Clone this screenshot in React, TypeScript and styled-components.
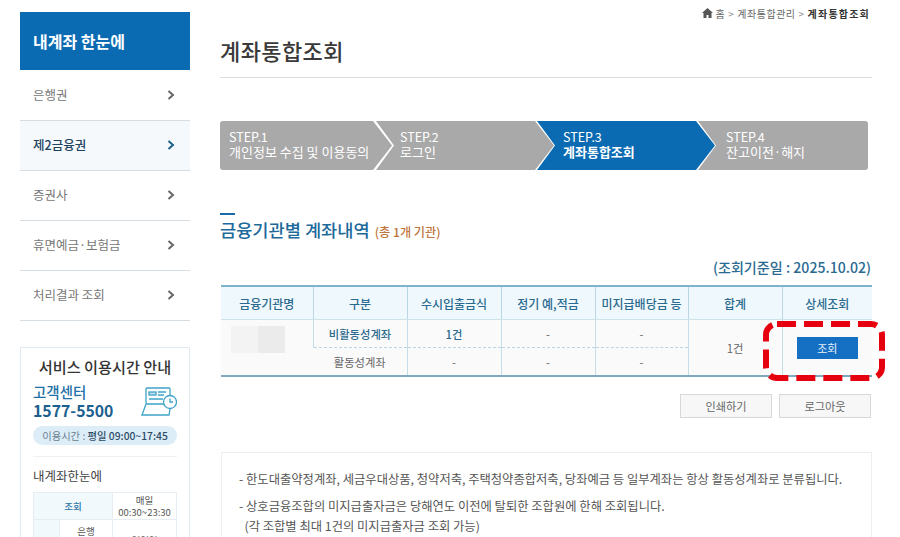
import React from 'react';
import styled, { createGlobalStyle } from 'styled-components';

const steps = [
  { no: 'STEP.1', label: '개인정보 수집 및 이용동의', width: 172, pad: 9, overlap: 0 },
  { no: 'STEP.2', label: '로그인', width: 178, pad: 24, overlap: 16 },
  { no: 'STEP.3', label: '계좌통합조회', width: 178, pad: 26, overlap: 17, active: true },
  { no: 'STEP.4', label: '잔고이전·해지', width: 170, pad: 28, overlap: 17, last: true },
];

const menus = ['은행권', '제2금융권', '증권사', '휴면예금·보험금', '처리결과 조회'];

const App: React.FC = () => {
  return (
    <Page>
      <GlobalStyle />
      <Sidebar>
        <SideTitle>내계좌 한눈에</SideTitle>
        <Menu>
          {menus.map((m, i) => (
            <MenuItem key={m} $active={i === 1}>
              {m}
              <svg width="8" height="10" viewBox="0 0 8 10">
                <path d="M1.5 1 L6 5 L1.5 9" fill="none" stroke={i === 1 ? '#1f5f8a' : '#666'} strokeWidth="2" />
              </svg>
            </MenuItem>
          ))}
        </Menu>
        <ServiceBox>
          <ServiceTitle>서비스 이용시간 안내</ServiceTitle>
          <CenterRow>
            <div>
              <CenterName>고객센터</CenterName>
              <CenterTel>1577-5500</CenterTel>
            </div>
            <svg width="36" height="30" viewBox="0 0 36 30" fill="none" stroke="#3fa3c9" strokeWidth="1.3">
              <rect x="5" y="1" width="24" height="16" rx="1" />
              <rect x="8" y="5" width="7" height="3" fill="#bfe0ee" />
              <path d="M17 5h8M17 8h6M8 12h14" />
              <path d="M5 17 L1 28 H28 L29 22" />
              <circle cx="29" cy="15" r="6.5" fill="#fff" />
              <path d="M29 11.5V15h3" />
            </svg>
          </CenterRow>
          <HoursPill>
            이용시간 : <b>평일 09:00~17:45</b>
          </HoursPill>
          <ServiceRule />
          <ServiceSub>내계좌한눈에</ServiceSub>
          <HoursTable>
            <colgroup>
              <col style={{ width: 26 }} />
              <col style={{ width: 53 }} />
              <col />
            </colgroup>
            <tbody>
              <tr>
                <HoursHead colSpan={2}>조회</HoursHead>
                <HoursCell>
                  매일
                  <br />
                  00:30~23:30
                </HoursCell>
              </tr>
              <tr>
                <HoursHead />
                <HoursCell $top>은행</HoursCell>
                <HoursCell $tall>영업일</HoursCell>
              </tr>
            </tbody>
          </HoursTable>
        </ServiceBox>
      </Sidebar>

      <Main>
        <Breadcrumb>
          <svg width="11" height="10" viewBox="0 0 11 10">
            <path d="M5.5 0 L11 5 H9.5 V10 H6.5 V7 H4.5 V10 H1.5 V5 H0 Z" fill="#555" />
          </svg>
          <span>홈</span>
          <Sep>&gt;</Sep>
          <span>계좌통합관리</span>
          <Sep>&gt;</Sep>
          <b>계좌통합조회</b>
        </Breadcrumb>
        <PageTitle>계좌통합조회</PageTitle>

        <Steps>
          {steps.map((s, i) => (
            <Step
              key={s.no}
              $w={s.width}
              $pad={s.pad}
              $overlap={s.overlap}
              $first={i === 0}
              $last={!!s.last}
              $active={!!s.active}
            >
              <span>{s.no}</span>
              <StepLabel $active={!!s.active}>{s.label}</StepLabel>
            </Step>
          ))}
        </Steps>

        <SectionHead>
          <SectionTitle>금융기관별 계좌내역</SectionTitle>
          <SectionCount>(총 1개 기관)</SectionCount>
        </SectionHead>
        <BaseDate>(조회기준일 : 2025.10.02)</BaseDate>

        <TableWrap>
          <Table>
            <colgroup>
              <col style={{ width: 92 }} />
              <col style={{ width: 94 }} />
              <col style={{ width: 94 }} />
              <col style={{ width: 94 }} />
              <col style={{ width: 93 }} />
              <col style={{ width: 94 }} />
              <col />
            </colgroup>
            <thead>
              <tr>
                <Th>금융기관명</Th>
                <Th>구분</Th>
                <Th>수시입출금식</Th>
                <Th>정기 예,적금</Th>
                <Th>미지급배당금 등</Th>
                <Th>합계</Th>
                <Th>상세조회</Th>
              </tr>
            </thead>
            <tbody>
              <tr>
                <Td rowSpan={2}>
                  <BlurName>
                    <i />
                    <i />
                  </BlurName>
                </Td>
                <Td $dash $strong>비활동성계좌</Td>
                <Td $dash $strong>1건</Td>
                <Td $dash>-</Td>
                <Td $dash>-</Td>
                <Td rowSpan={2}>1건</Td>
                <Td rowSpan={2}>
                  <QueryButton>조회</QueryButton>
                </Td>
              </tr>
              <tr>
                <Td>활동성계좌</Td>
                <Td>-</Td>
                <Td>-</Td>
                <Td>-</Td>
              </tr>
            </tbody>
          </Table>
          <Highlight viewBox="0 0 122 60" width="122" height="60">
            <rect
              x="3"
              y="3"
              width="116"
              height="54"
              rx="11"
              fill="none"
              stroke="#e6000f"
              strokeWidth="6"
              strokeDasharray="19 8"
            />
          </Highlight>
        </TableWrap>

        <Actions>
          <ActionButton>인쇄하기</ActionButton>
          <ActionButton>로그아웃</ActionButton>
        </Actions>

        <Notes>
          <Note>- 한도대출약정계좌, 세금우대상품, 청약저축, 주택청약종합저축, 당좌예금 등 일부계좌는 항상 활동성계좌로 분류됩니다.</Note>
          <Note>
            - 상호금융조합의 미지급출자금은 당해연도 이전에 탈퇴한 조합원에 한해 조회됩니다.
            <br />
            &nbsp;&nbsp;(각 조합별 최대 1건의 미지급출자금 조회 가능)
          </Note>
        </Notes>
      </Main>
    </Page>
  );
};

const GlobalStyle = createGlobalStyle`
  html, body {
    margin: 0;
    padding: 0;
    height: 537px;
    overflow: hidden;
    background: #fff;
  }
  body {
    font-family: "Noto Sans CJK KR", "Noto Sans", sans-serif;
    color: #555;
  }
`;

const Page = styled.div`
  display: flex;
  align-items: flex-start;
  gap: 30px;
  width: 900px;
  height: 537px;
  padding-left: 20px;
  box-sizing: border-box;
  overflow: hidden;
`;

const Sidebar = styled.aside`
  flex: 0 0 170px;
  padding-top: 12px;
`;

const SideTitle = styled.div`
  height: 58px;
  padding-left: 13px;
  box-sizing: border-box;
  display: flex;
  align-items: center;
  background: #0a6bb3;
  color: #fff;
  font-size: 16px;
  font-weight: 700;
`;

const Menu = styled.div`
  padding-top: 1px;
  margin-bottom: 26px;
`;

const MenuItem = styled.div<{ $active?: boolean }>`
  height: 50px;
  padding: 0 15px 2px 13px;
  box-sizing: border-box;
  display: flex;
  align-items: center;
  justify-content: space-between;
  border-bottom: 1px solid #d5dde3;
  background: ${(p) => (p.$active ? '#f5f9fc' : '#fff')};
  color: ${(p) => (p.$active ? '#1f4460' : '#777')};
  font-size: 12.5px;
  font-weight: ${(p) => (p.$active ? 500 : 400)};
`;

const ServiceBox = styled.div`
  border: 1px solid #dfeaf1;
  padding: 7px 12px 0;
  height: 220px;
  box-sizing: border-box;
`;

const ServiceTitle = styled.div`
  text-align: center;
  font-size: 15.2px;
  font-weight: 500;
  color: #333;
  line-height: 22px;
  white-space: nowrap;
`;

const CenterRow = styled.div`
  display: flex;
  justify-content: space-between;
  align-items: center;
  margin-top: 6px;
`;

const CenterName = styled.div`
  color: #1f72a8;
  font-size: 14.5px;
  font-weight: 500;
  line-height: 18px;
`;

const CenterTel = styled.div`
  color: #1d5f8f;
  font-size: 15.8px;
  font-weight: 700;
  line-height: 19px;
`;

const HoursPill = styled.div`
  margin-top: 6px;
  height: 19px;
  line-height: 19px;
  border-radius: 10px;
  background: #dcedf8;
  text-align: center;
  font-size: 10.3px;
  color: #6a7f8d;
  white-space: nowrap;

  b {
    color: #2d4b66;
    font-weight: 500;
  }
`;

const ServiceRule = styled.div`
  height: 1px;
  background: #eef0f1;
  margin-top: 11px;
`;

const ServiceSub = styled.div`
  font-size: 12.5px;
  color: #444;
  line-height: 18px;
  margin-top: 10px;
`;

const HoursTable = styled.table`
  width: 100%;
  table-layout: fixed;
  border-collapse: collapse;
  margin-top: 7px;
  font-size: 9.5px;
  line-height: 12px;
`;

const HoursHead = styled.th`
  border: 1px solid #e6eef3;
  background: #f1f9fd;
  color: #2a73a5;
  font-weight: 500;
  height: 25px;
  padding: 0;
`;

const HoursCell = styled.td<{ $top?: boolean; $tall?: boolean }>`
  border: 1px solid #e6eef3;
  text-align: center;
  color: #555;
  padding: ${(p) => (p.$top ? '5px 0 0' : '1px 0')};
  vertical-align: ${(p) => (p.$top ? 'top' : 'middle')};
  height: ${(p) => (p.$tall ? '38px' : 'auto')};
`;

const Main = styled.main`
  flex: 0 0 652px;
  min-width: 0;
`;

const Breadcrumb = styled.div`
  height: 26px;
  box-sizing: border-box;
  padding-right: 2px;
  display: flex;
  align-items: center;
  justify-content: flex-end;
  gap: 3px;
  font-size: 10px;
  letter-spacing: 0.5px;
  color: #666;

  b {
    color: #333;
    font-weight: 700;
    letter-spacing: 1.2px;
  }
`;

const Sep = styled.span`
  color: #888;
`;

const PageTitle = styled.h1`
  margin: 0;
  height: 52px;
  box-sizing: border-box;
  padding-top: 6px;
  font-size: 22px;
  line-height: 36px;
  font-weight: 500;
  letter-spacing: 0.4px;
  color: #3a3a3a;
  border-bottom: 1px solid #dcdcdc;
`;

const Steps = styled.div`
  display: flex;
  margin-top: 43px;
`;

const Step = styled.div<{
  $w: number;
  $pad: number;
  $overlap: number;
  $first: boolean;
  $last: boolean;
  $active: boolean;
}>`
  flex: 0 0 ${(p) => p.$w}px;
  height: 49px;
  box-sizing: border-box;
  margin-left: -${(p) => p.$overlap}px;
  padding-left: ${(p) => p.$pad}px;
  padding-top: 8px;
  display: flex;
  flex-direction: column;
  background: ${(p) => (p.$active ? '#0a6bb3' : '#a9a9a9')};
  color: #fff;
  font-size: 12.5px;
  line-height: 15px;
  white-space: nowrap;
  clip-path: polygon(
    0 0,
    ${(p) => (p.$last ? '100%' : 'calc(100% - 19px)')} 0,
    100% ${(p) => (p.$last ? '0' : '50%')},
    ${(p) => (p.$last ? '100%' : 'calc(100% - 19px)')} 100%,
    0 100%,
    ${(p) => (p.$first ? '0' : '18px')} 50%
  );
  border-radius: ${(p) => (p.$first ? '3px 0 0 3px' : p.$last ? '0 3px 3px 0' : '0')};
`;

const StepLabel = styled.span<{ $active: boolean }>`
  font-size: 13px;
  font-weight: ${(p) => (p.$active ? 700 : 400)};
`;

const SectionHead = styled.div`
  margin-top: 43px;
  padding-top: 5px;
  display: flex;
  align-items: baseline;
  gap: 5px;
  position: relative;

  &::before {
    content: '';
    position: absolute;
    left: 0;
    top: 0;
    width: 15px;
    height: 2px;
    background: #1a6ca8;
  }
`;

const SectionTitle = styled.h2`
  margin: 0;
  font-size: 17.6px;
  line-height: 24px;
  font-weight: 500;
  color: #1d6a9b;
`;

const SectionCount = styled.span`
  font-size: 12.2px;
  font-weight: 500;
  color: #c0763c;
`;

const BaseDate = styled.div`
  margin-top: 15px;
  text-align: right;
  padding-right: 1px;
  font-size: 14.1px;
  line-height: 20px;
  font-weight: 500;
  color: #2a6a92;
`;

const TableWrap = styled.div`
  position: relative;
  margin: 8px 0 0 1px;
`;

const Table = styled.table`
  width: 100%;
  table-layout: fixed;
  border-collapse: collapse;
  border-top: 2px solid #7fb2cf;
  border-bottom: 2px solid #7fa9c1;
`;

const Th = styled.th`
  height: 32px;
  padding: 0;
  background: #eff8fc;
  border-left: 1px solid #b9d6e6;
  border-bottom: 1px solid #cfe2ec;
  color: #2a6a8f;
  font-size: 12px;
  font-weight: 500;
  white-space: nowrap;

  &:first-child {
    border-left: 0;
  }
`;

const Td = styled.td<{ $dash?: boolean; $strong?: boolean }>`
  height: 27px;
  padding: 0;
  background: #fafafa;
  border-left: 1px solid #c6dde9;
  border-bottom: ${(p) => (p.$dash ? '1px dashed #b9d6e6' : '0')};
  text-align: center;
  font-size: 11.3px;
  color: ${(p) => (p.$strong ? '#2a6a8f' : '#666')};
  font-weight: ${(p) => (p.$strong ? 500 : 400)};

  &:first-child {
    border-left: 0;
  }
`;

const BlurName = styled.div`
  display: flex;
  margin: -16px 0 0 10px;

  i {
    width: 27px;
    height: 27px;
    background: #f3f3f3;
  }

  i + i {
    background: #ebebeb;
  }
`;

const QueryButton = styled.button`
  width: 61px;
  height: 22px;
  padding: 0;
  border: 0;
  background: #1570c4;
  color: #e6f1fa;
  font-family: inherit;
  font-size: 11px;
  vertical-align: middle;
`;

const Highlight = styled.svg`
  position: absolute;
  left: 542px;
  top: 36px;
  pointer-events: none;
`;

const Actions = styled.div`
  display: flex;
  justify-content: flex-end;
  gap: 7px;
  margin-top: 17px;
  padding-right: 1px;
`;

const ActionButton = styled.button`
  width: 92px;
  height: 24px;
  padding: 0;
  background: #f7f7f7;
  border: 1px solid #d8d8d8;
  color: #666;
  font-family: inherit;
  font-size: 11.2px;
`;

const Notes = styled.div`
  margin: 34px 0 0 1px;
  padding: 16px 17px 0;
  height: 120px;
  box-sizing: border-box;
  border: 1px solid #eeeeee;
`;

const Note = styled.p`
  margin: 0 0 7px;
  font-size: 12.3px;
  line-height: 20px;
  color: #555;
  white-space: nowrap;
`;

export default App;
